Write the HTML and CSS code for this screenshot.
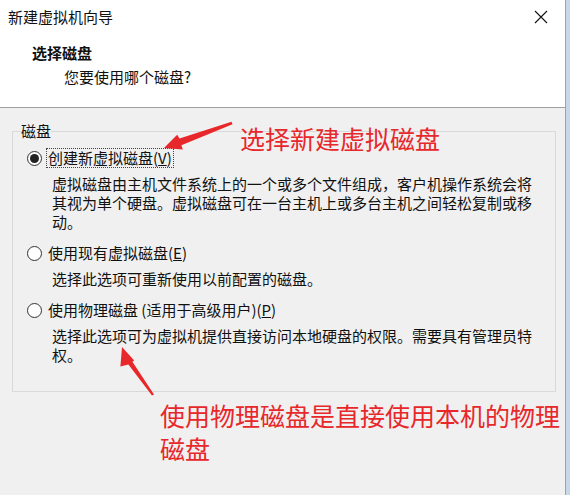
FILE: index.html
```html
<!DOCTYPE html>
<html lang="zh-CN">
<head>
    <meta charset="UTF-8">
    <title>新建虚拟机向导</title>
    <link rel="stylesheet" href="styles.css">
</head>
<body>
    <div class="wizard">
        <div class="title-bar">
            <span class="title">新建虚拟机向导</span>
            <svg class="close" width="14" height="14" viewBox="0 0 14 14">
                <path d="M1 1 L13 13 M13 1 L1 13" stroke="#111" stroke-width="1.1" fill="none"/>
            </svg>
        </div>
        <div class="header">
            <div class="header-title">选择磁盘</div>
            <div class="header-sub">您要使用哪个磁盘?</div>
        </div>

        <div class="content">
            <fieldset class="group">
                <legend>磁盘</legend>

                <div class="option">
                    <span class="radio checked"></span>
                    <span class="label focused">创建新虚拟磁盘(<u>V</u>)</span>
                </div>
                <p class="desc">虚拟磁盘由主机文件系统上的一个或多个文件组成，客户机操作系统会将<br>其视为单个硬盘。虚拟磁盘可在一台主机上或多台主机之间轻松复制或移<br>动。</p>

                <div class="option">
                    <span class="radio"></span>
                    <span class="label">使用现有虚拟磁盘(<u>E</u>)</span>
                </div>
                <p class="desc">选择此选项可重新使用以前配置的磁盘。</p>

                <div class="option">
                    <span class="radio"></span>
                    <span class="label">使用物理磁盘 (适用于高级用户)(<u>P</u>)</span>
                </div>
                <p class="desc">选择此选项可为虚拟机提供直接访问本地硬盘的权限。需要具有管理员特<br>权。</p>
            </fieldset>

            <div class="note note-bottom">使用物理磁盘是直接使用本机的物理<br>磁盘</div>
        </div>

        <!-- annotations drawn on top of the dialog -->
        <div class="note note-top">选择新建虚拟磁盘</div>
        <svg class="arrows" width="565" height="495" viewBox="0 0 565 495">
            <polygon fill="#e8272b" points="231.5,121.8 179.5,138.6 177.2,134.8 164,148 182.8,149.4 181.4,145.2 232.5,124.2"/>
            <polygon fill="#e8272b" points="152,395.5 128.4,364.4 120.4,366.4 122,347 134.2,360.6 132.4,361.8 154,394.5"/>
        </svg>
    </div>
</body>
</html>
```

FILE: styles.css
```css
body {
    margin: 0;
    width: 570px;
    height: 495px;
    overflow: hidden;
    background: #c9d8e8;
    font-family: "Noto Sans CJK SC", "Noto Sans", sans-serif;
    font-size: 15px;
    color: #111;
}

.wizard {
    position: relative;
    width: 565px;
    height: 495px;
    background: #f0f0f0;
    border-right: 1px solid #8fa6bf;
}

.title-bar {
    height: 34px;
    display: flex;
    align-items: center;
    justify-content: space-between;
    padding: 0 17px 0 8px;
    background: #fff;
}

.title {
    line-height: 20px;
}

.header {
    background: #fff;
    padding: 9px 0 20px;
    border-bottom: 1px solid #a0a0a0;
}

.header-title {
    margin-left: 32px;
    font-weight: bold;
    line-height: 20px;
}

.header-sub {
    margin: 4px 0 0 64px;
    line-height: 20px;
}

.content {
    padding-top: 13px;
}

.group {
    margin: 0 9px 0 12px;
    padding: 0 0 27px 8px;
    border: 1px solid #d9d9d9;
}

.group legend {
    padding: 0;
    line-height: 20px;
}

.option {
    display: flex;
    align-items: center;
    height: 20px;
    margin: 7px 0 0 6px;
}

.option + .desc + .option {
    margin-top: 12px;
}

.radio {
    position: relative;
    width: 13px;
    height: 13px;
    border: 1px solid #333;
    border-radius: 50%;
    background: #fff;
    margin-right: 4px;
}

.radio.checked::after {
    content: "";
    position: absolute;
    left: 2px;
    top: 2px;
    width: 9px;
    height: 9px;
    border-radius: 50%;
    background: #222;
}

.label {
    line-height: 18px;
    padding: 0 1px;
    border: 1px dotted transparent;
}

.label.focused {
    border-color: #444;
}

.desc {
    margin: 6px 0 0 31px;
    line-height: 19px;
    white-space: nowrap;
}

.note {
    color: #e8272b;
    font-size: 25px;
    line-height: 33px;
}

.note-bottom {
    margin: 7px 0 0 160px;
}

.note-top {
    position: absolute;
    left: 240px;
    top: 122px;
}

.arrows {
    position: absolute;
    left: 0;
    top: 0;
    pointer-events: none;
}
```
